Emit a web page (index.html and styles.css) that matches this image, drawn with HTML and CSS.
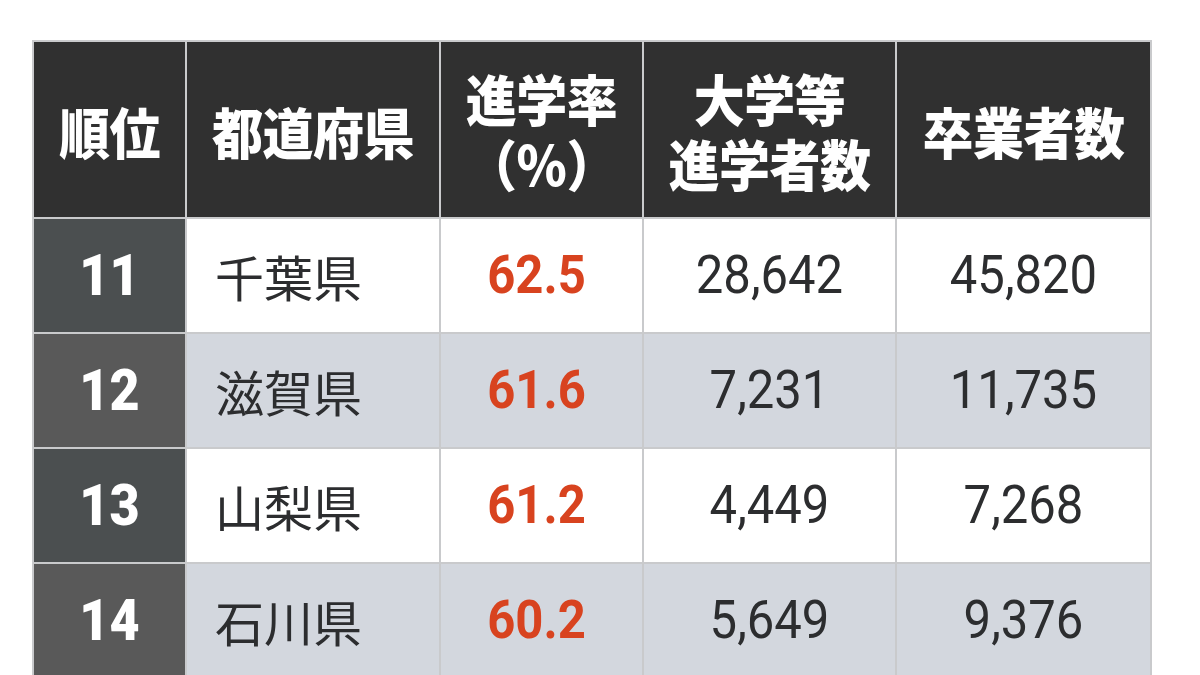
FILE: index.html
```html
<!DOCTYPE html>
<html lang="ja">
<head>
<meta charset="utf-8">
<link rel="stylesheet" href="styles.css">
</head>
<body>
<div class="wrap">
<table class="rank">
  <colgroup>
    <col class="c1"><col class="c2"><col class="c3"><col class="c4"><col class="c5">
  </colgroup>
  <thead>
    <tr>
      <th><span class="t">順位</span></th>
      <th><span class="t">都道府県</span></th>
      <th><span class="t">進学率<br>（%）</span></th>
      <th><span class="t">大学等<br>進学者数</span></th>
      <th><span class="t">卒業者数</span></th>
    </tr>
  </thead>
  <tbody>
    <tr class="odd">
      <td class="no"><span class="t">11</span></td><td class="pref">千葉県</td><td class="rate"><span class="t">62.5</span></td><td class="num"><span class="t">28,642</span></td><td class="num"><span class="t">45,820</span></td>
    </tr>
    <tr class="even">
      <td class="no"><span class="t">12</span></td><td class="pref">滋賀県</td><td class="rate"><span class="t">61.6</span></td><td class="num"><span class="t">7,231</span></td><td class="num"><span class="t">11,735</span></td>
    </tr>
    <tr class="odd">
      <td class="no"><span class="t">13</span></td><td class="pref">山梨県</td><td class="rate"><span class="t">61.2</span></td><td class="num"><span class="t">4,449</span></td><td class="num"><span class="t">7,268</span></td>
    </tr>
    <tr class="even">
      <td class="no"><span class="t">14</span></td><td class="pref">石川県</td><td class="rate"><span class="t">60.2</span></td><td class="num"><span class="t">5,649</span></td><td class="num"><span class="t">9,376</span></td>
    </tr>
  </tbody>
</table>
</div>
</body>
</html>
```
FILE: styles.css
```css
html, body {
  margin: 0;
  padding: 0;
  background: #ffffff;
}
body {
  font-family: Roboto, "Noto Sans CJK JP", sans-serif;
  overflow: hidden;
  height: 675px;
}
.wrap {
  padding: 40px 0 0 32px;
}
.rank {
  border-collapse: collapse;
  table-layout: fixed;
  width: 1118px;
}
.c1 { width: 153px; }
.c2 { width: 254px; }
.c3 { width: 203px; }
.c4 { width: 253px; }
.c5 { width: 255px; }
.rank th, .rank td {
  border: 2px solid #c9cacc;
  padding: 0;
  text-align: center;
  vertical-align: middle;
}
.t {
  display: inline-block;
  transform: scaleY(1.08);
}
.rank th {
  background: #303030;
  color: #ffffff;
  height: 175px;
  font-family: "Noto Sans CJK JP", sans-serif;
  font-weight: 900;
  font-size: 51px;
  line-height: 60px;
  letter-spacing: -0.5px;
}
.rank td {
  height: 113px;
  color: #2c2d2f;
  font-size: 49px;
}
.rank tr.odd td { background: #ffffff; }
.rank tr.even td { background: #d3d7de; }
.rank tr.odd td.no { background: #4b4f50; }
.rank tr.even td.no { background: #595959; }
.rank td.no {
  color: #ffffff;
  font-weight: 900;
  font-size: 52px;
}
.rank td.no .t {
  transform: scaleY(1.12);
}
.rank td.pref {
  text-align: left;
  padding-left: 28px;
  font-family: "Noto Sans CJK JP", sans-serif;
  font-weight: 400;
  font-size: 49px;
}
.rank td.rate {
  color: #d8431f;
  font-weight: 700;
  font-size: 49px;
  padding-right: 10px;
}
.rank td.num {
  font-weight: 400;
}
```
